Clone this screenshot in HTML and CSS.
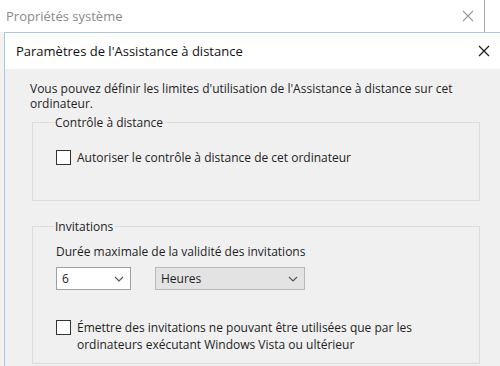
FILE: index.html
```html
<!DOCTYPE html>
<html lang="fr">
<head>
    <meta charset="UTF-8">
    <title>Paramètres de l'Assistance à distance</title>
    <link rel="stylesheet" href="styles.css">
</head>
<body>

<div class="back-bar">
    <div class="back-title">
        <span>Propriétés système</span>
        <svg class="x-icon" width="12" height="12" viewBox="0 0 12 12"><path d="M1 1L11 11M11 1L1 11" stroke="#9a9a9a" stroke-width="1.1" fill="none"/></svg>
    </div>
</div>

<div class="dialog">
    <div class="dialog-title">
        <span>Paramètres de l'Assistance à distance</span>
        <svg class="x-icon" width="12" height="12" viewBox="0 0 12 12"><path d="M1 1L11 11M11 1L1 11" stroke="#1a1a1a" stroke-width="1.2" fill="none"/></svg>
    </div>

    <div class="dialog-body">
        <p class="intro">Vous pouvez définir les limites d'utilisation de l'Assistance à distance sur cet ordinateur.</p>

        <fieldset class="group group-control">
            <legend>Contrôle à distance</legend>
            <label class="check">
                <span class="box"></span>
                <span>Autoriser le contrôle à distance de cet ordinateur</span>
            </label>
        </fieldset>

        <fieldset class="group group-invite">
            <legend>Invitations</legend>
            <div class="field-label">Durée maximale de la validité des invitations</div>
            <div class="combos">
                <div class="combo combo-num">
                    <span>6</span>
                    <svg width="10" height="6" viewBox="0 0 10 6"><path d="M1 1L5 5L9 1" stroke="#555" stroke-width="1.1" fill="none"/></svg>
                </div>
                <div class="combo combo-unit">
                    <span>Heures</span>
                    <svg width="10" height="6" viewBox="0 0 10 6"><path d="M1 1L5 5L9 1" stroke="#555" stroke-width="1.1" fill="none"/></svg>
                </div>
            </div>
            <label class="check check-top">
                <span class="box"></span>
                <span>Émettre des invitations ne pouvant être utilisées que par les ordinateurs exécutant Windows Vista ou ultérieur</span>
            </label>
        </fieldset>
    </div>
</div>

</body>
</html>
```

FILE: styles.css
```css
body {
    margin: 0;
    padding: 0;
    background-color: #f2f2f2;
    font-family: "Open Sans", "Noto Sans", sans-serif;
    font-size: 12px;
    color: #1e1e1e;
    width: 500px;
    height: 366px;
    overflow: hidden;
}

.back-bar {
    background-color: #fff;
    height: 32px;
}

.back-title {
    width: 485px;
    height: 32px;
    border-right: 1px solid #a8a8a8;
    display: flex;
    align-items: center;
    justify-content: space-between;
    padding-left: 6px;
    padding-right: 10px;
    box-sizing: border-box;
    color: #8a8a8a;
    font-size: 13px;
}

.dialog {
    margin-left: 4px;
    border-left: 1px solid #a9c8e6;
    border-top: 1px solid #a9c8e6;
}

.dialog-title {
    background-color: #fff;
    height: 36px;
    display: flex;
    align-items: center;
    justify-content: space-between;
    padding-left: 11px;
    padding-right: 10px;
    font-size: 13px;
    color: #111;
}

.dialog-body {
    background-color: #f0f0f0;
    height: 300px;
    padding: 12px 0 0 25px;
}

.intro {
    margin: 0;
    width: 430px;
    line-height: 15px;
}

.group {
    margin: 3px 0 0 2px;
    width: 448px;
    box-sizing: border-box;
    border: 1px solid #dcdcdc;
    padding: 0;
}

.group legend {
    margin-left: -2px;
    padding: 0 2px 0 1px;
}

.group-control {
    height: 87px;
    padding: 18px 0 0 23px;
}

.group-invite {
    margin-top: 17px;
    height: 146px;
    padding: 9px 0 0 23px;
}

.check {
    display: flex;
    align-items: flex-start;
    gap: 6px;
    line-height: 17px;
}

.box {
    flex: none;
    width: 13px;
    height: 13px;
    border: 1px solid #333;
    background-color: #fff;
    margin-top: 1px;
}

.check-top {
    margin-top: 29px;
}

.field-label {
    line-height: 16px;
}

.combos {
    display: flex;
    gap: 24px;
    margin-top: 7px;
}

.combo {
    height: 23px;
    box-sizing: border-box;
    border: 1px solid #a0a0a0;
    display: flex;
    align-items: center;
    justify-content: space-between;
    padding: 0 6px 0 5px;
}

.combo-num {
    width: 75px;
    background-color: #fff;
}

.combo-unit {
    width: 150px;
    background-color: #e3e3e3;
    border-color: #b9b9b9;
}
```
